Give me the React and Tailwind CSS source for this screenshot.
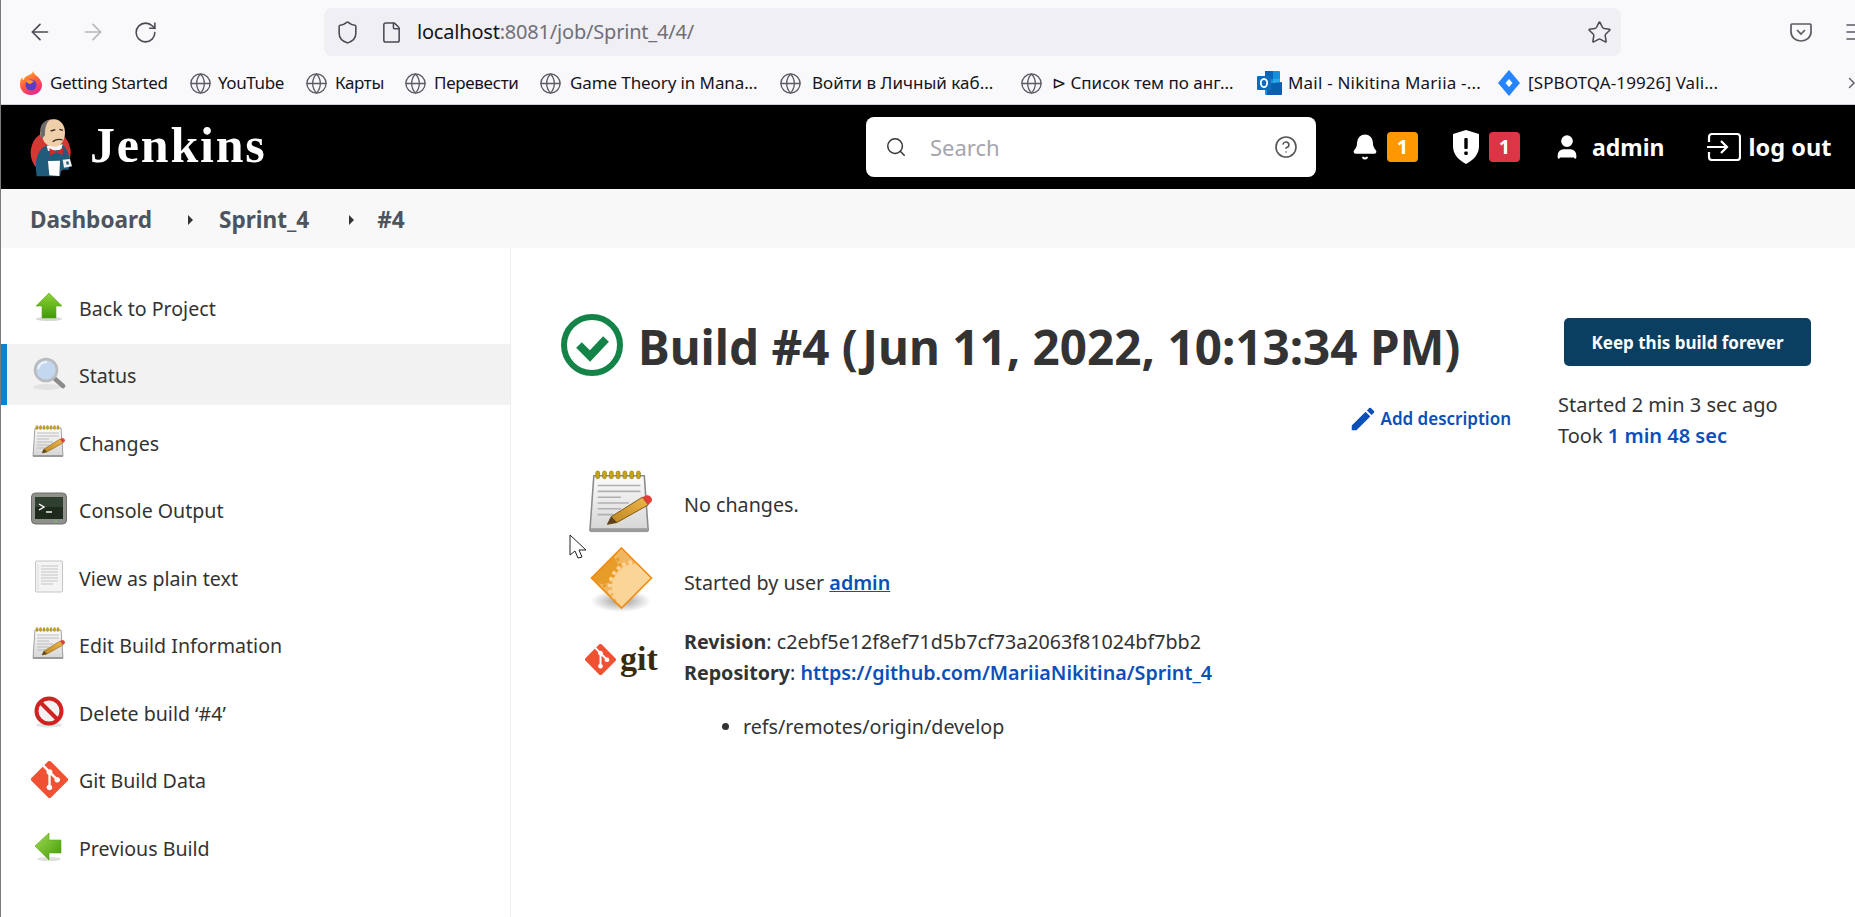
import React from 'react';
import { ArrowLeft, ArrowRight, RotateCw, Shield, File, Star, Globe, Search, CircleHelp, Bell, User, ChevronsRight, Menu } from 'lucide-react';

const FirefoxIcon = () => (
    <svg width="24" height="26" viewBox="0 0 24 26">
        <defs>
            <linearGradient id="ff" x1="0.2" y1="0" x2="0.7" y2="1">
                <stop offset="0" stopColor="#ffb62e" />
                <stop offset="0.5" stopColor="#ff5a3c" />
                <stop offset="1" stopColor="#e6238f" />
            </linearGradient>
        </defs>
        <path d="M14 1c1 3 3 4 5 6 3 3 4 6 4 8 0 6-5 10-11 10S1 21 1 14c0-3 1-5 2-7 0 2 1 3 2 3 0-3 3-4 5-5 2-1 4-2 4-4z" fill="url(#ff)" />
        <circle cx="12" cy="15" r="5.5" fill="#5b3cc4" />
        <path d="M7 11c3-2 7-1 8 1-2 0-3 1-3 2-2 0-4-1-5-3z" fill="#ff9a2e" />
    </svg>
);

const OutlookIcon = () => (
    <svg width="25" height="26" viewBox="0 0 25 26">
        <rect x="8" y="1" width="15" height="24" rx="1" fill="#1490df" />
        <rect x="8" y="1" width="8" height="8" fill="#0364b8" />
        <rect x="16" y="9" width="7" height="8" fill="#28a8ea" />
        <path d="M10 14l15-2v12a1 1 0 0 1-1 1H10z" fill="#0a5fb0" />
        <rect x="0" y="6" width="14" height="14" rx="1" fill="#0f6cbd" />
        <ellipse cx="7" cy="13" rx="3.2" ry="4" fill="none" stroke="#fff" strokeWidth="1.8" />
    </svg>
);

const JiraIcon = () => (
    <svg width="24" height="26" viewBox="0 0 24 26">
        <path d="M12 0l11 13-11 13L1 13z" fill="#2684ff" />
        <path d="M12 9l3.5 4-3.5 4-3.5-4z" fill="#fff" />
    </svg>
);

const PocketIcon = () => (
    <svg width="22" height="22" viewBox="0 0 22 22" fill="none" stroke="#5b5b66" strokeWidth="1.7">
        <path d="M2 3h18a1 1 0 0 1 1 1v7a10 9 0 0 1-20 0V4a1 1 0 0 1 1-1z" />
        <path d="M7 9l4 4 4-4" />
    </svg>
);

// coordinates follow a 3x crop of the logo, so it is drawn in a 210x216 box
const JenkinsLogo = () => (
    <svg width="70" height="72" viewBox="0 0 210 216" className="shrink-0">
        <ellipse cx="92" cy="125" rx="60" ry="65" fill="#d33833" />
        <path d="M50 196C44 150 50 120 76 104l50-4c14 10 24 34 24 60l-4 16-22 0-4 20z" fill="#1f5c7c" />
        <path d="M80 104l48-4-4 16-40 4z" fill="#f5f5f5" />
        <path d="M62 60C60 35 85 22 105 25c20 3 30 20 30 40 0 20-10 40-30 42-20 1-35-12-37-27-6 0-10-10-6-20z" fill="#efcfa9" />
        <path d="M62 62C58 40 75 28 90 26 76 38 75 55 75 72l-8 10c-7-4-7-12-5-20z" fill="#6b6b6b" />
        <path d="M92 60l14-4M118 55l11 3M98 92c10-7 22-8 30-5" stroke="#3a2a20" strokeWidth="4" fill="none" />
        <path d="M88 112l22 10 20-12-2 22-18-8-20 10z" fill="#d3272a" />
        <path d="M84 150l36-1-2 46-30-2z" fill="#fff" />
        <path d="M128 146l22-2 6 22-24 4z" fill="#f2f2f2" />
        <path d="M138 152l7-1 2 9-7 1z" fill="#1f5c7c" />
    </svg>
);

const LogoutIcon = () => (
    <svg width="34" height="28" viewBox="0 0 34 28" fill="none" stroke="#fff" strokeWidth="2.2">
        <path d="M2 9V4a3 3 0 0 1 3-3h25a3 3 0 0 1 3 3v20a3 3 0 0 1-3 3H5a3 3 0 0 1-3-3v-5" />
        <path d="M0 14h20M14 8l6 6-6 6" />
    </svg>
);

const HeaderShield = () => (
    <svg width="28" height="34" viewBox="0 0 28 34">
        <path d="M14 0l13 4v12c0 9-6 14-13 18C7 30 1 25 1 16V4z" fill="#fff" />
        <rect x="12.3" y="8" width="3.4" height="11" rx="1" fill="#000" />
        <rect x="12.3" y="21.5" width="3.4" height="3.5" rx="1" fill="#000" />
    </svg>
);

const UpArrowIcon = () => (
    <svg width="30" height="30" viewBox="0 0 30 30">
        <defs>
            <linearGradient id="ga" x1="0" y1="0" x2="0" y2="1">
                <stop offset="0" stopColor="#8fd43a" />
                <stop offset="1" stopColor="#3f9a06" />
            </linearGradient>
        </defs>
        <ellipse cx="15" cy="27" rx="13" ry="2" fill="#d8d8d8" />
        <path d="M15 1l13 13h-6v12H8V14H2z" fill="url(#ga)" stroke="#5aa61a" strokeWidth="0.6" />
    </svg>
);

const LeftArrowIcon = () => (
    <svg width="30" height="30" viewBox="0 0 30 30">
        <defs>
            <linearGradient id="gb" x1="0" y1="0" x2="1" y2="1">
                <stop offset="0" stopColor="#a4dc55" />
                <stop offset="1" stopColor="#3f9a06" />
            </linearGradient>
        </defs>
        <ellipse cx="15" cy="27" rx="12" ry="2" fill="#dedede" />
        <path d="M1 14L15 1v7h12v13H15v7z" fill="url(#gb)" stroke="#5aa61a" strokeWidth="0.6" />
    </svg>
);

const MagnifierIcon = () => (
    <svg width="34" height="34" viewBox="0 0 34 34">
        <ellipse cx="15" cy="30" rx="14" ry="3" fill="#e2e2e2" />
        <path d="M22 21l9 8" stroke="#8b8b8b" strokeWidth="4.5" strokeLinecap="round" />
        <circle cx="14" cy="13" r="11" fill="#c3d7ef" stroke="#b9bcbf" strokeWidth="2.6" />
        <path d="M6 12c1-5 5-7 9-7" stroke="#eef5fd" strokeWidth="2" fill="none" />
    </svg>
);

const NotepadIcon = ({ size = 34 }) => (
    <svg width={size} height={size} viewBox="0 0 34 34">
        <defs>
            <linearGradient id="np" x1="0" y1="0" x2="0" y2="1">
                <stop offset="0" stopColor="#fbfbfb" />
                <stop offset="1" stopColor="#d6d6d6" />
            </linearGradient>
            <linearGradient id="pc" x1="0" y1="1" x2="1" y2="0">
                <stop offset="0" stopColor="#b98320" />
                <stop offset="1" stopColor="#f0b64a" />
            </linearGradient>
        </defs>
        <path d="M3 3h26l2 28H1z" fill="url(#np)" stroke="#8a8a8a" strokeWidth="0.8" />
        <rect x="1" y="30" width="30" height="2" fill="#9a9a9a" />
        <g fill="#c7a612" stroke="#8a7410" strokeWidth="0.3">
            <rect x="4" y="0.5" width="2" height="4" rx="1" />
            <rect x="7.5" y="0.5" width="2" height="4" rx="1" />
            <rect x="11" y="0.5" width="2" height="4" rx="1" />
            <rect x="14.5" y="0.5" width="2" height="4" rx="1" />
            <rect x="18" y="0.5" width="2" height="4" rx="1" />
            <rect x="21.5" y="0.5" width="2" height="4" rx="1" />
            <rect x="25" y="0.5" width="2" height="4" rx="1" />
        </g>
        <g stroke="#b0b0b0" strokeWidth="0.8">
            <path d="M5 8h22M5 11h22M5 14h12M5 17h16M5 20h12M5 23h8" />
        </g>
        <path d="M10 28l2-4 16-10 3 4-16 9z" fill="url(#pc)" stroke="#7c5a14" strokeWidth="0.5" />
        <path d="M28 14l3 4 2-2c0-2-1-3-3-3z" fill="#e0403a" />
        <path d="M10 28l2-4 3 3z" fill="#5a4220" />
    </svg>
);

const TerminalIcon = () => (
    <svg width="36" height="34" viewBox="0 0 36 34">
        <rect x="0.5" y="1" width="35" height="31" rx="4" fill="#8e908c" stroke="#6c6e6a" />
        <rect x="4" y="5" width="28" height="22" fill="#1d2a1c" />
        <path d="M4 5h28v10H4z" fill="#2f4030" />
        <path d="M8 12l5 3-5 3" stroke="#fff" strokeWidth="1.4" fill="none" />
        <path d="M15 20h6" stroke="#fff" strokeWidth="1.4" />
        <circle cx="25" cy="29.5" r="0.8" fill="#7fe05a" />
    </svg>
);

const PageIcon = () => (
    <svg width="30" height="34" viewBox="0 0 30 34">
        <rect x="1.5" y="1" width="27" height="31" rx="1" fill="#f4f4f4" stroke="#c5c5c5" />
        <path d="M7 6h17M7 9h17M7 12h17M7 15h17M7 18h17M7 21h17M7 24h12" stroke="#c4c4c4" strokeWidth="1" />
        <path d="M4 4v26" stroke="#dcdcdc" strokeWidth="1" />
    </svg>
);

const NoEntryIcon = () => (
    <svg width="32" height="32" viewBox="0 0 32 32">
        <ellipse cx="16" cy="29" rx="13" ry="2.5" fill="#e4e4e4" />
        <circle cx="16" cy="15" r="12.5" fill="#f2f2f2" stroke="#cf2320" strokeWidth="4" />
        <path d="M7 6l18 18" stroke="#cf2320" strokeWidth="4" />
    </svg>
);

const GitDiamond = ({ size = 37 }) => (
    <svg width={size} height={size} viewBox="0 0 92 92" className="shrink-0">
        <path d="M90.2 42L50 1.8a6 6 0 0 0-8.4 0l-8.4 8.4 10.6 10.6a7 7 0 0 1 9 9l10.2 10.2a7 7 0 1 1-4.2 4L49 34.5v25a7 7 0 1 1-5.8-.2V34a7 7 0 0 1-3.8-9.3L29 14.4 1.8 41.6a6 6 0 0 0 0 8.4L42 90.2a6 6 0 0 0 8.4 0l39.8-39.8a6 6 0 0 0 0-8.4z" fill="#f05133" />
    </svg>
);

const GearDiamond = () => (
    <svg width="85" height="75" viewBox="0 0 85 75">
        <defs>
            <radialGradient id="sh">
                <stop offset="0" stopColor="#9a9a9a" />
                <stop offset="1" stopColor="#ffffff" />
            </radialGradient>
            <clipPath id="dm">
                <path d="M41.5 4l30 30-30 30-30-30z" />
            </clipPath>
        </defs>
        <ellipse cx="41" cy="57" rx="30" ry="11" fill="url(#sh)" />
        <g clipPath="url(#dm)">
            <rect x="0" y="0" width="85" height="75" fill="#f1b660" />
            <circle cx="22" cy="24" r="16" fill="#e89c28" />
            <circle cx="22" cy="24" r="18" fill="none" stroke="#e89c28" strokeWidth="3" strokeDasharray="3 3" />
            <circle cx="55" cy="43" r="23" fill="#fbd598" />
            <circle cx="55" cy="43" r="25" fill="none" stroke="#fbd598" strokeWidth="4" strokeDasharray="3.5 3" />
        </g>
        <path d="M41.5 4l30 30-30 30-30-30z" fill="none" stroke="#f28c0f" strokeWidth="1.6" />
    </svg>
);

const SuccessIcon = () => (
    <svg width="62" height="62" viewBox="0 0 62 62" fill="none">
        <circle cx="31" cy="31" r="28" stroke="#138347" strokeWidth="6" />
        <path d="M18 31l11 11 16-17" stroke="#138347" strokeWidth="8" />
    </svg>
);

const EditIcon = () => (
    <svg width="30" height="30" viewBox="0 0 24 24" fill="#0b4fb8">
        <path d="M3 17.25V21h3.75L17.81 9.94l-3.75-3.75L3 17.25zM20.71 7.04a1 1 0 0 0 0-1.41l-2.34-2.34a1 1 0 0 0-1.41 0l-1.83 1.83 3.75 3.75 1.83-1.83z" />
    </svg>
);

const CursorIcon = () => (
    <svg width="20" height="28" viewBox="0 0 20 28">
        <path d="M1 1v20l5-4 3 7 4-1-3-7h7z" fill="#fff" stroke="#222" strokeWidth="1" />
    </svg>
);

const globe = <Globe size={23} color="#5b5b66" strokeWidth={1.4} className="shrink-0" />;

const bookmarks = [
    { label: 'Getting Started', icon: <FirefoxIcon />, width: 'w-[170px]', track: 'tracking-[-0.3px]', gap: 'gap-[7px]' },
    { label: 'YouTube', icon: globe, width: 'w-[116px]', track: 'tracking-[-0.4px]', gap: 'gap-[6px]' },
    { label: 'Карты', icon: globe, width: 'w-[99px]', track: 'tracking-[-0.4px]', gap: 'gap-[7px]' },
    { label: 'Перевести', icon: globe, width: 'w-[135px]', track: 'tracking-[-0.3px]', gap: 'gap-[7px]' },
    { label: 'Game Theory in Mana...', icon: globe, width: 'w-[240px]', track: 'tracking-[-0.1px]', gap: 'gap-[8px]' },
    { label: 'Войти в Личный каб...', icon: globe, width: 'w-[241px]', track: 'tracking-[0px]', gap: 'gap-[10px]' },
    { label: '⊳ Список тем по анг...', icon: globe, width: 'w-[237px]', track: 'tracking-[0px]', gap: 'gap-[9px]' },
    { label: 'Mail - Nikitina Mariia -...', icon: <OutlookIcon />, width: 'w-[240px]', track: 'tracking-[0.2px]', gap: 'gap-[6px]' },
    { label: '[SPBOTQA-19926] Vali...', icon: <JiraIcon />, width: 'w-[347px]', track: 'tracking-[0.1px]', gap: 'gap-[7px]' },
];

const sideItems = [
    { label: 'Back to Project', icon: <UpArrowIcon /> },
    { label: 'Status', icon: <MagnifierIcon />, active: true },
    { label: 'Changes', icon: <NotepadIcon /> },
    { label: 'Console Output', icon: <TerminalIcon /> },
    { label: 'View as plain text', icon: <PageIcon /> },
    { label: 'Edit Build Information', icon: <NotepadIcon /> },
    { label: 'Delete build ‘#4’', icon: <NoEntryIcon /> },
    { label: 'Git Build Data', icon: <GitDiamond /> },
    { label: 'Previous Build', icon: <LeftArrowIcon /> },
];

const Crumb = ({ children }) => (
    <span className="text-[22.6px] font-bold text-[#4d545d]">{children}</span>
);

const CrumbArrow = () => (
    <span className="block w-0 h-0 border-y-[5px] border-y-transparent border-l-[5px] border-l-[#333]"></span>
);

export default function App() {
    return (
        <div className="w-[1855px] h-[917px] overflow-hidden bg-white border-l border-[#7a7a7a] font-['Noto_Sans',sans-serif] text-[#333] relative">
            {/* Browser toolbar */}
            <div className="h-[105px] bg-[#f9f9fb] border-b border-[#cfcfd8] flex flex-col">
                <div className="h-[64px] flex items-center pl-[26px]">
                    <ArrowLeft size={26} color="#4a4a55" strokeWidth={1.5} className="shrink-0" />
                    <ArrowRight size={26} color="#b5b5bb" strokeWidth={1.5} className="ml-[27px] shrink-0" />
                    <RotateCw size={25} color="#4a4a55" strokeWidth={1.5} className="ml-[27px] shrink-0" />
                    <div className="ml-[166px] w-[1297px] h-[48px] shrink-0 bg-[#f0f0f4] rounded-lg flex items-center pl-[11px] pr-[9px]">
                        <Shield size={25} color="#4a4a55" strokeWidth={1.5} />
                        <File size={23} color="#4a4a55" strokeWidth={1.6} className="ml-[20px]" />
                        <span className="ml-[14px] text-[20px] tracking-[-0.2px] text-[#15141a]">
                            localhost<span className="text-[#6f6f78]">:8081/job/Sprint_4/4/</span>
                        </span>
                        <Star size={25} color="#4a4a55" strokeWidth={1.5} className="ml-auto" />
                    </div>
                    <div className="ml-[169px] shrink-0"><PocketIcon /></div>
                    <Menu size={24} color="#5b5b66" strokeWidth={1.6} className="ml-[31px] shrink-0" />
                </div>
                <div className="flex-1 flex items-center pl-[18px] pb-[2px]">
                    {bookmarks.map(b => (
                        <div key={b.label} className={`${b.width} ${b.track} ${b.gap} shrink-0 flex items-center text-[17px] text-[#15141a] whitespace-nowrap`}>
                            {b.icon}
                            <span>{b.label}</span>
                        </div>
                    ))}
                    <ChevronsRight size={22} color="#5b5b66" strokeWidth={1.5} className="shrink-0" />
                </div>
            </div>

            {/* Jenkins header */}
            <header className="h-[84px] bg-black flex items-center pl-[19px]">
                <JenkinsLogo />
                <span className="w-[176px] shrink-0 whitespace-nowrap font-['Liberation_Serif',serif] font-bold text-[50px] leading-none tracking-[1.8px] text-white pb-[5px]">Jenkins</span>
                <div className="ml-[600px] w-[450px] h-[60px] shrink-0 bg-white rounded-[8px] flex items-center pl-[19px] pr-[18px]">
                    <Search size={22} color="#333" strokeWidth={1.6} />
                    <span className="ml-[23px] pt-[1px] text-[22px] text-[#a5a5ad]">Search</span>
                    <CircleHelp size={24} color="#555" strokeWidth={1.6} className="ml-auto" />
                </div>
                <Bell size={28} fill="#fff" color="#fff" strokeWidth={1.5} className="ml-[35px] shrink-0" />
                <span className="ml-[8px] w-[31px] h-[30px] shrink-0 rounded-[4px] bg-[#ff9800] text-white font-bold text-[20px] flex items-center justify-center">1</span>
                <div className="ml-[34px] shrink-0"><HeaderShield /></div>
                <span className="ml-[9px] w-[31px] h-[30px] shrink-0 rounded-[4px] bg-[#dc3545] text-white font-bold text-[20px] flex items-center justify-center">1</span>
                <User size={28} fill="#fff" color="#fff" className="ml-[33px] shrink-0" />
                <span className="ml-[11px] pt-[1px] text-white font-bold text-[23px]">admin</span>
                <div className="ml-[42px] shrink-0"><LogoutIcon /></div>
                <span className="ml-[8px] pt-[1px] text-white font-bold text-[23.5px] whitespace-nowrap">log out</span>
            </header>

            {/* Breadcrumbs */}
            <nav className="h-[59px] bg-[#f8f8f8] flex items-center pl-[29px] pt-[3px]">
                <Crumb>Dashboard</Crumb>
                <span className="ml-[36px]"><CrumbArrow /></span>
                <span className="ml-[26px]"><Crumb>Sprint_4</Crumb></span>
                <span className="ml-[40px]"><CrumbArrow /></span>
                <span className="ml-[23px]"><Crumb>#4</Crumb></span>
            </nav>

            <div className="flex h-[669px]">
                {/* Sidebar */}
                <aside className="w-[510px] shrink-0 border-r border-[#eee] pt-[28px] flex flex-col gap-[6.5px]">
                    {sideItems.map(item => (
                        <div
                            key={item.label}
                            className={`h-[61px] flex items-center text-[19.6px] text-[#333] ${item.active ? 'bg-[#f2f2f2] border-l-[6px] border-[#0b84d0]' : 'border-l-[6px] border-transparent'}`}
                        >
                            <span className="w-[44px] ml-[20px] flex justify-center shrink-0">{item.icon}</span>
                            <span className="ml-[8px] pt-[4px]">{item.label}</span>
                        </div>
                    ))}
                </aside>

                {/* Main */}
                <main className="flex-1 pl-[50px] pr-[43px] pt-[66px] flex">
                    <div className="flex-1">
                        <div className="flex items-center gap-[15px]">
                            <SuccessIcon />
                            <h1 className="text-[47.6px] font-bold text-[#333] whitespace-nowrap leading-none pt-[4px]">Build #4 (Jun 11, 2022, 10:13:34 PM)</h1>
                        </div>
                        <div className="flex justify-end items-center gap-[2px] mt-[28px] pr-[48px] text-[#0b4fb8] text-[17px] font-semibold">
                            <EditIcon />
                            <span>Add description</span>
                        </div>
                        <div className="grid grid-cols-[123px_1fr] items-center mt-[36px] text-[19.7px]">
                            <div className="pl-[27px] h-[66px] flex items-center"><NotepadIcon size={66} /></div>
                            <div className="pt-[4px]">No changes.</div>
                            <div className="pl-[19px] h-[90px] flex items-center"><GearDiamond /></div>
                            <div className="pt-[4px]">Started by user <span className="font-semibold text-[#0b4fb8] underline">admin</span></div>
                            <div className="pl-[24px] self-start pt-[16px] flex items-center">
                                <GitDiamond size={31} />
                                <span className="ml-[4px] font-['Liberation_Serif',serif] font-bold text-[34px] leading-none text-[#3a2a0c]">git</span>
                            </div>
                            <div className="leading-[31px]">
                                <div><b>Revision</b>: c2ebf5e12f8ef71d5b7cf73a2063f81024bf7bb2</div>
                                <div><b>Repository</b>: <span className="font-semibold text-[#0b4fb8]">https://github.com/MariiaNikitina/Sprint_4</span></div>
                                <ul className="list-disc ml-[59px] mt-[23px]">
                                    <li>refs/remotes/origin/develop</li>
                                </ul>
                            </div>
                        </div>
                    </div>
                    <div className="w-[253px] shrink-0 pt-[4px]">
                        <div className="ml-[5px] w-[247px] h-[48px] rounded-[5px] bg-[#0b3f62] text-white font-bold text-[17px] flex items-center justify-center pt-[1px]">Keep this build forever</div>
                        <div className="mt-[23px] -ml-[1px] text-[20px] leading-[31px]">
                            <div>Started 2 min 3 sec ago</div>
                            <div>Took <span className="font-semibold text-[#0b4fb8]">1 min 48 sec</span></div>
                        </div>
                    </div>
                </main>
            </div>

            {/* Mouse pointer from the screenshot */}
            <div className="absolute left-[568px] top-[534px]"><CursorIcon /></div>
        </div>
    );
}
